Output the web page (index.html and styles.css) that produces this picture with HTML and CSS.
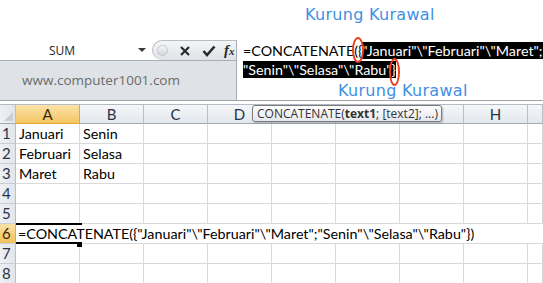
FILE: index.html
```html
<!DOCTYPE html>
<html lang="en">
<head>
  <meta charset="UTF-8">
  <meta name="viewport" content="width=device-width, initial-scale=1.0">
  <title>CONCATENATE</title>
  <link rel="stylesheet" href="styles.css">
</head>
<body>

<div class="sheet">
  <div class="top"></div>

  <div class="fbar">
    <div class="left">
      <div class="namerow">
        <div class="namebox">SUM</div>
        <span class="drop"></span>
        <div class="btns">
          <span class="dot"></span>
          <svg class="ico" width="12" height="12" viewBox="0 0 12 12"><path d="M2 2 L10 10 M10 2 L2 10" stroke="#2b2b2b" stroke-width="2.2" fill="none"/></svg>
          <svg class="ico" width="14" height="12" viewBox="0 0 14 12"><path d="M1.5 6 L5 10 L12.5 1.5" stroke="#2b2b2b" stroke-width="2.6" fill="none"/></svg>
          <span class="fx">f<small>x</small></span>
        </div>
      </div>
      <div class="site">www.computer1001.com</div>
    </div>
    <div class="formula">=CONCATENATE({<span class="sel">"Januari"\"Februari"\"Maret";</span><br><span class="sel">"Senin"\"Selasa"\"Rabu"}</span></div>
  </div>

  <div class="gap"></div>

  <div class="grid">
    <div class="row head">
      <div class="rh corner"><span class="tri"></span></div>
      <div class="c on">A</div>
      <div class="c">B</div>
      <div class="c">C</div>
      <div class="c">D</div>
      <div class="c">E</div>
      <div class="c">F</div>
      <div class="c">G</div>
      <div class="c">H</div>
      <div class="c last"></div>
    </div>
    <div class="row">
      <div class="rh">1</div>
      <div class="c">Januari</div><div class="c">Senin</div><div class="c"></div><div class="c"></div><div class="c"></div><div class="c"></div><div class="c"></div><div class="c"></div><div class="c last"></div>
    </div>
    <div class="row">
      <div class="rh">2</div>
      <div class="c">Februari</div><div class="c">Selasa</div><div class="c"></div><div class="c"></div><div class="c"></div><div class="c"></div><div class="c"></div><div class="c"></div><div class="c last"></div>
    </div>
    <div class="row">
      <div class="rh">3</div>
      <div class="c">Maret</div><div class="c">Rabu</div><div class="c"></div><div class="c"></div><div class="c"></div><div class="c"></div><div class="c"></div><div class="c"></div><div class="c last"></div>
    </div>
    <div class="row">
      <div class="rh">4</div>
      <div class="c"></div><div class="c"></div><div class="c"></div><div class="c"></div><div class="c"></div><div class="c"></div><div class="c"></div><div class="c"></div><div class="c last"></div>
    </div>
    <div class="row">
      <div class="rh">5</div>
      <div class="c"></div><div class="c"></div><div class="c"></div><div class="c"></div><div class="c"></div><div class="c"></div><div class="c"></div><div class="c"></div><div class="c last"></div>
    </div>
    <div class="row">
      <div class="rh on">6</div>
      <div class="edit">=CONCATENATE({"Januari"\"Februari"\"Maret";"Senin"\"Selasa"\"Rabu"})<span class="handle"></span></div>
    </div>
    <div class="row">
      <div class="rh">7</div>
      <div class="c"></div><div class="c"></div><div class="c"></div><div class="c"></div><div class="c"></div><div class="c"></div><div class="c"></div><div class="c"></div><div class="c last"></div>
    </div>
    <div class="row">
      <div class="rh">8</div>
      <div class="c"></div><div class="c"></div><div class="c"></div><div class="c"></div><div class="c"></div><div class="c"></div><div class="c"></div><div class="c"></div><div class="c last"></div>
    </div>
  </div>

  <!-- overlays -->
  <div class="note note-top">Kurung Kurawal</div>
  <div class="note note-bottom">Kurung Kurawal</div>
  <span class="ring ring-open"></span>
  <span class="ring ring-close"></span>
  <div class="tip">CONCATENATE(<b>text1</b>; [text2]; ...)</div>
</div>

</body>
</html>
```

FILE: styles.css
```css
body {
  margin: 0;
  padding: 0;
  background-color: #fff;
}

.sheet {
  position: relative;
  width: 543px;
  height: 283px;
  overflow: hidden;
  background-color: #fff;
  font-family: Lato, "Open Sans", sans-serif;
}

.top {
  height: 40px;
}

/* formula bar */
.fbar {
  display: flex;
  height: 61px;
  border-bottom: 1px solid #9ea5ae;
  box-sizing: border-box;
}

.left {
  flex: none;
  width: 237px;
  display: flex;
  flex-direction: column;
  border-right: 1px solid #a4abb4;
  box-sizing: border-box;
}

.namerow {
  display: flex;
  align-items: center;
  height: 21px;
  border-bottom: 1px solid #a9afb8;
  box-sizing: border-box;
}

.namebox {
  width: 124px;
  text-align: center;
  font-family: "Open Sans", sans-serif;
  font-size: 12px;
  color: #1e1e1e;
}

.drop {
  width: 0;
  height: 0;
  margin-left: 14px;
  border-left: 4px solid transparent;
  border-right: 4px solid transparent;
  border-top: 4px solid #3a3a3a;
}

.btns {
  display: flex;
  align-items: center;
  margin-left: auto;
  width: 84px;
  height: 20px;
  box-sizing: border-box;
  border: 1px solid #b9bec5;
  border-right: none;
  border-bottom: none;
  border-radius: 11px 0 0 11px;
  background: linear-gradient(#f4f5f7, #dfe2e6);
}

.dot {
  width: 9px;
  height: 9px;
  margin-left: 4px;
  border-radius: 50%;
  border: 1px solid #c4c8cd;
  background: linear-gradient(#f7f7f7, #d2d5d9);
}

.ico {
  margin-left: 11px;
}

.fx {
  margin-left: 8px;
  font-family: "Liberation Serif", serif;
  font-style: italic;
  font-weight: bold;
  font-size: 15px;
  color: #2b2b2b;
}

.fx small {
  font-size: 11px;
}

.site {
  flex: 1;
  background-color: #dfe2e7;
  padding-left: 22px;
  font-family: "Open Sans", sans-serif;
  font-size: 13.5px;
  color: #6b6b6b;
  line-height: 38px;
}

.formula {
  flex: 1;
  min-width: 0;
  overflow: hidden;
  padding: 1px 0 0 6px;
  font-size: 14.3px;
  line-height: 19px;
  color: #000;
  white-space: nowrap;
}

.sel {
  background-color: #000;
  color: #fff;
}

.gap {
  height: 3px;
}

/* grid */
.row {
  display: flex;
  height: 20px;
}

.rh {
  width: 16px;
  flex: none;
  box-sizing: border-box;
  background: linear-gradient(to right, #eef0f3, #e2e6eb);
  border-right: 1px solid #b8bfc8;
  border-bottom: 1px solid #c9ced5;
  font-size: 15px;
  line-height: 19px;
  padding-left: 2px;
  color: #283447;
}

.rh.on {
  background: linear-gradient(#fbe2a7, #f2c25a);
  border-right-color: #e7a73d;
  color: #3a2a0a;
}

.c {
  width: 64px;
  flex: none;
  box-sizing: border-box;
  border-right: 1px solid #d9d9d9;
  border-bottom: 1px solid #d9d9d9;
  padding-left: 3px;
  font-size: 14.3px;
  line-height: 19px;
  color: #000;
  white-space: nowrap;
}

.c.last {
  width: 15px;
}

.head .c {
  text-align: center;
  padding-left: 0;
  background: linear-gradient(#f5f7f9, #e3e7ec);
  border-top: 1px solid #b4bbc4;
  border-right-color: #b8bfc8;
  border-bottom-color: #9eabb9;
  font-size: 15px;
  line-height: 18px;
  color: #283447;
}

.head .c.on {
  background: linear-gradient(#fbe3aa, #f3c561);
  border-right-color: #e6a43a;
  border-bottom-color: #e6a43a;
  color: #3a2a0a;
}

.head .rh {
  border-top: 1px solid #b4bbc4;
  border-bottom-color: #9eabb9;
  position: relative;
}

.tri {
  position: absolute;
  right: 2px;
  bottom: 2px;
  width: 0;
  height: 0;
  border-left: 9px solid transparent;
  border-bottom: 9px solid #c9ced5;
}

.edit {
  position: relative;
  flex: 1;
  box-sizing: border-box;
  border-top: 1px solid #d9d9d9;
  border-bottom: 1px solid #d9d9d9;
  margin-top: -1px;
  height: 21px;
  padding-left: 2px;
  font-size: 14.3px;
  line-height: 19px;
  white-space: nowrap;
}

.edit::before {
  content: "";
  position: absolute;
  left: 0;
  top: -1px;
  width: 66px;
  height: 2px;
  background-color: #000;
}

.edit::after {
  content: "";
  position: absolute;
  left: 0;
  bottom: -1px;
  width: 61px;
  height: 2px;
  background-color: #000;
}

.handle {
  position: absolute;
  left: 61px;
  bottom: -4px;
  width: 5px;
  height: 5px;
  background-color: #000;
}

/* annotations */
.note {
  position: absolute;
  font-family: "DejaVu Sans", sans-serif;
  font-size: 16px;
  color: #3f8fe4;
  letter-spacing: 0.3px;
}

.note-top {
  left: 305px;
  top: 5px;
}

.note-bottom {
  left: 338px;
  top: 81px;
}

.ring {
  position: absolute;
  box-sizing: border-box;
  border: 2px solid #e8401c;
  border-radius: 50%;
}

.ring-open {
  left: 352px;
  top: 37px;
  width: 12px;
  height: 26px;
}

.ring-close {
  left: 389px;
  top: 58px;
  width: 11px;
  height: 28px;
}

.tip {
  position: absolute;
  left: 252px;
  top: 105px;
  width: 190px;
  height: 17px;
  box-sizing: border-box;
  border: 1px solid #7a7a7a;
  border-radius: 3px;
  background: linear-gradient(#ffffff, #e6e7ee);
  box-shadow: 1px 1px 2px rgba(0, 0, 0, 0.25);
  font-family: "Open Sans", sans-serif;
  font-size: 12px;
  line-height: 15px;
  padding-left: 4px;
  color: #333;
  white-space: nowrap;
}
```
